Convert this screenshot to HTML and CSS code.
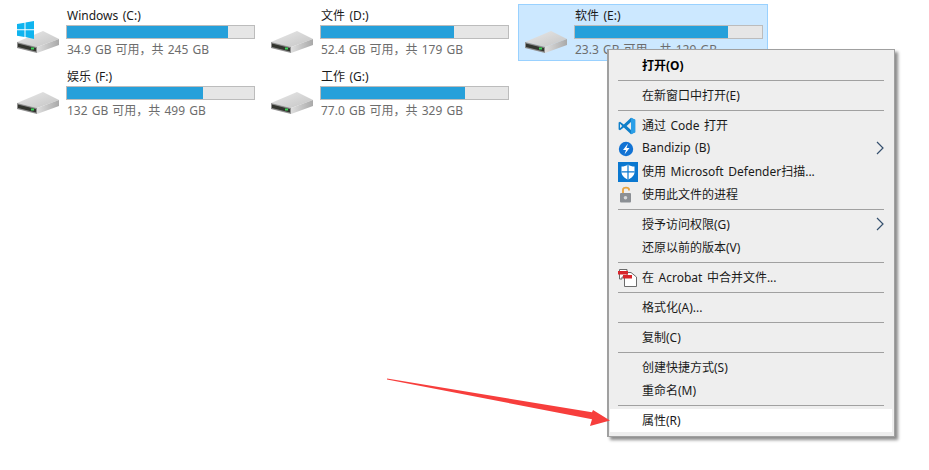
FILE: index.html
```html
<!DOCTYPE html>
<html lang="zh-CN">
<head>
<meta charset="UTF-8">
<title>此电脑</title>
<link rel="stylesheet" href="styles.css">
</head>
<body>

<svg class="defs" width="0" height="0">
  <defs>
    <linearGradient id="driveTop" x1="0" y1="0" x2="1" y2="1">
      <stop offset="0" stop-color="#e9e9e9"/>
      <stop offset="1" stop-color="#c4c4c4"/>
    </linearGradient>
    <linearGradient id="driveSide" x1="0" y1="0" x2="1" y2="0">
      <stop offset="0" stop-color="#dedede"/>
      <stop offset="1" stop-color="#a9a9a9"/>
    </linearGradient>
    <symbol id="drive" viewBox="0 0 42 22">
      <path d="M0 11 26 0 42 8 20 16Z" fill="url(#driveTop)"/>
      <path d="M20 16 42 8V14L20 22Z" fill="url(#driveSide)"/>
      <path d="M0 11 20 16V22L0 17Z" fill="#8f8f8f"/>
      <path d="M1 12.5 19 17V20.5L1 16Z" fill="#33352f"/>
      <rect x="14" y="16.5" width="3" height="2" fill="#3fd35a"/>
    </symbol>
  </defs>
</svg>

<main class="drives">
  <div class="drive">
    <div class="drive-icon">
      <svg class="drive-img"><use href="#drive"/></svg>
      <svg class="win-logo" viewBox="0 0 17 18">
        <path d="M0 3 7.5 1.8V8.3H0ZM8.5 1.6 17 0V8.3H8.5ZM0 9.3H7.5V15.9L0 14.8ZM8.5 9.3H17V18L8.5 16.1Z" fill="#0fb4ef"/>
      </svg>
    </div>
    <div class="drive-info">
      <div class="drive-name">Windows (C:)</div>
      <div class="bar"><div class="bar-fill" style="width:86%"></div></div>
      <div class="drive-stats">34.9 GB 可用，共 245 GB</div>
    </div>
  </div>
  <div class="drive">
    <div class="drive-icon"><svg class="drive-img"><use href="#drive"/></svg></div>
    <div class="drive-info">
      <div class="drive-name">文件 (D:)</div>
      <div class="bar"><div class="bar-fill" style="width:71%"></div></div>
      <div class="drive-stats">52.4 GB 可用，共 179 GB</div>
    </div>
  </div>
  <div class="drive selected">
    <div class="drive-icon"><svg class="drive-img"><use href="#drive"/></svg></div>
    <div class="drive-info">
      <div class="drive-name">软件 (E:)</div>
      <div class="bar"><div class="bar-fill" style="width:82%"></div></div>
      <div class="drive-stats">23.3 GB 可用，共 129 GB</div>
    </div>
  </div>
  <div class="drive">
    <div class="drive-icon"><svg class="drive-img"><use href="#drive"/></svg></div>
    <div class="drive-info">
      <div class="drive-name">娱乐 (F:)</div>
      <div class="bar"><div class="bar-fill" style="width:72.5%"></div></div>
      <div class="drive-stats">132 GB 可用，共 499 GB</div>
    </div>
  </div>
  <div class="drive">
    <div class="drive-icon"><svg class="drive-img"><use href="#drive"/></svg></div>
    <div class="drive-info">
      <div class="drive-name">工作 (G:)</div>
      <div class="bar"><div class="bar-fill" style="width:77%"></div></div>
      <div class="drive-stats">77.0 GB 可用，共 329 GB</div>
    </div>
  </div>
</main>

<div class="menu">
  <div class="item bold"><span class="item-icon"></span>打开(O)</div>
  <div class="sep"></div>
  <div class="item"><span class="item-icon"></span>在新窗口中打开(E)</div>
  <div class="sep"></div>
  <div class="item">
    <span class="item-icon">
      <svg viewBox="0 0 18 18" width="18" height="18">
        <path d="M13 .8 17.2 2.8V15.2L13 17.2 5.8 10.4 2 13.3.6 12.5V5.5L2 4.7 5.8 7.6ZM13 5 8.6 9 13 13ZM2 6.8V11.2L4.2 9Z" fill="#0f7fc9"/>
        <path d="M13 .8 17.2 2.8V15.2L13 17.2Z" fill="#2a9fe8"/>
      </svg>
    </span>通过 Code 打开
  </div>
  <div class="item">
    <span class="item-icon">
      <svg viewBox="0 0 18 18" width="18" height="18">
        <circle cx="8" cy="9" r="7.2" fill="#1273d4"/>
        <path d="M10 3.500 5 10H8L6.500 14.500 11.500 8H8.500Z" fill="#fff"/>
      </svg>
    </span>Bandizip (B)
    <svg class="chevron" viewBox="0 0 8 14"><path d="M1 1 7 7 1 13" fill="none" stroke="#35506e" stroke-width="1.2"/></svg>
  </div>
  <div class="item">
    <span class="item-icon">
      <svg viewBox="0 0 20 20" width="20" height="20">
        <rect width="20" height="20" fill="#0b78d0"/>
        <path d="M10 2.500C12 4 14 4.600 16.500 4.600V10C16.500 13.500 13.500 16 10 17.500 6.500 16 3.500 13.500 3.500 10V4.600C6 4.600 8 4 10 2.500Z" fill="#fff"/>
        <path d="M9.400 2.500H10.600V17.500H9.400ZM3.500 9.200H16.500V10.400H3.500Z" fill="#0b78d0"/>
      </svg>
    </span>使用 Microsoft Defender扫描...
  </div>
  <div class="item">
    <span class="item-icon">
      <svg viewBox="0 0 18 18" width="18" height="18">
        <path d="M5 7V3.500C5 1 11 1 11 3.500V4.500" fill="none" stroke="#e8a33c" stroke-width="1.800"/>
        <rect x="2" y="7" width="11" height="9.500" rx="1" fill="#8b8f94"/>
        <circle cx="7.500" cy="11.800" r="1.800" fill="#d5d7d9"/>
      </svg>
    </span>使用此文件的进程
  </div>
  <div class="sep"></div>
  <div class="item"><span class="item-icon"></span>授予访问权限(G)
    <svg class="chevron" viewBox="0 0 8 14"><path d="M1 1 7 7 1 13" fill="none" stroke="#35506e" stroke-width="1.2"/></svg>
  </div>
  <div class="item"><span class="item-icon"></span>还原以前的版本(V)</div>
  <div class="sep"></div>
  <div class="item">
    <span class="item-icon">
      <svg viewBox="0 0 20 20" width="20" height="20">
        <path d="M6.500 4.500H13L18.500 9V18.500H6.500Z" fill="#fff" stroke="#6b6b6b"/>
        <path d="M1.500 1.500H9V9H4V11H1.500Z" fill="#fff" stroke="#6b6b6b"/>
        <rect x="0" y="3" width="10" height="3.500" fill="#d8262c"/>
        <rect x="5" y="7" width="9" height="3.500" fill="#d8262c"/>
      </svg>
    </span>在 Acrobat 中合并文件...
  </div>
  <div class="sep"></div>
  <div class="item"><span class="item-icon"></span>格式化(A)...</div>
  <div class="sep"></div>
  <div class="item"><span class="item-icon"></span>复制(C)</div>
  <div class="sep"></div>
  <div class="item"><span class="item-icon"></span>创建快捷方式(S)</div>
  <div class="item"><span class="item-icon"></span>重命名(M)</div>
  <div class="sep"></div>
  <div class="item active"><span class="item-icon"></span>属性(R)</div>
</div>

<svg class="arrow" viewBox="0 0 929 470" width="929" height="470">
  <path d="M387 378.600 592 412.300 593 410 610 420.500 590 426 592 419.300 387 379.400Z" fill="#f73e3c"/>
</svg>

</body>
</html>
```

FILE: styles.css
```css
body {
  margin: 0;
  background: #fff;
  color: #1a1a1a;
  font-family: "Noto Sans", "Noto Sans CJK SC", sans-serif;
  font-size: 12px;
  word-spacing: 1.4px;
  height: 470px;
  overflow: hidden;
  position: relative;
}

.defs {
  position: absolute;
}

.drives {
  display: grid;
  grid-template-columns: repeat(3, 250px);
  grid-auto-rows: 57px;
  gap: 4px;
  padding: 4px 10px;
}

.drive {
  display: flex;
  border: 1px solid transparent;
  box-sizing: border-box;
}

.drive.selected {
  background: #cce8ff;
  border-color: #99d1ff;
}

.drive-icon {
  position: relative;
  width: 42px;
  margin: 0 7px 0 6px;
}

.drive-img {
  display: block;
  width: 42px;
  height: 22px;
  margin-top: 26px;
}

.win-logo {
  position: absolute;
  left: 0;
  top: 16px;
  width: 17px;
  height: 18px;
}

.drive-info {
  width: 189px;
  padding-top: 3px;
}

.drive-name {
  line-height: 16px;
  height: 16px;
  padding-left: 1px;
}

.bar {
  height: 14px;
  margin-top: 1px;
  border: 1px solid #bcbcbc;
  background: #e6e6e6;
  box-sizing: border-box;
}

.bar-fill {
  height: 100%;
  background: #26a0da;
}

.drive-stats {
  margin-top: 3px;
  line-height: 16px;
  padding-left: 1px;
  color: #6d6d6d;
  word-spacing: 1px;
}

.menu {
  position: absolute;
  left: 607px;
  top: 49px;
  width: 288px;
  box-sizing: border-box;
  padding: 4px 2px 4px 1px;
  background: #eeeeee;
  border: 1px solid #a0a0a0;
  border-left-width: 2px;
  box-shadow: 3px 3px 3px rgba(0, 0, 0, 0.45);
}

.item {
  display: flex;
  align-items: center;
  box-sizing: border-box;
  height: 23px;
  padding-bottom: 2px;
  color: #1a1a1a;
}

.item.bold {
  font-weight: 700;
  color: #000;
}

.item.active {
  background: #fff;
}

.item-icon {
  display: flex;
  align-items: center;
  align-self: flex-start;
  flex: none;
  box-sizing: border-box;
  width: 32px;
  height: 23px;
  padding-left: 8px;
}

.chevron {
  width: 8px;
  height: 14px;
  margin-left: auto;
  margin-right: 8px;
}

.sep {
  height: 1px;
  margin: 3px 8px;
  background: #a0a0a0;
}

.arrow {
  position: absolute;
  left: 0;
  top: 0;
  pointer-events: none;
}
```
